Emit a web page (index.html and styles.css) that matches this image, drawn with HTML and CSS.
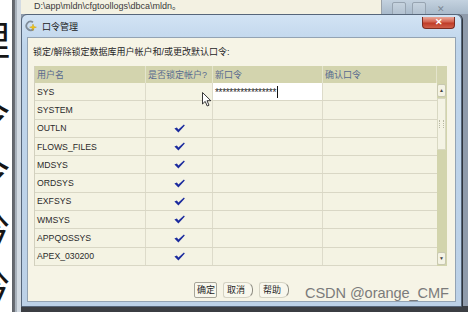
FILE: index.html
```html
<!doctype html>
<html>
<head>
    <meta charset="utf-8">
    <title>口令管理</title>
    <link rel="stylesheet" href="styles.css">
</head>
<body>
<div class="desk">
    <div class="side_doc">
        <span class="first">理</span>
        <span>令</span>
        <span>令</span>
        <span>钤</span>
        <span>钤</span>
    </div>
    <div class="side_frame"></div>
    <div class="back_win">
        <div class="back_top">
            <div class="back_path">D:\app\mldn\cfgtoollogs\dbca\mldn。</div>
            <div class="back_caption">
                <i></i><i></i><i class="x">✕</i>
            </div>
        </div>
        <div class="back_body"></div>
    </div>
</div>

<div class="dialog">
    <div class="titlebar">
        <svg class="icon" width="12" height="12" viewBox="0 0 12 12">
            <path d="M8 2.2 A4.3 4.3 0 1 0 8.6 9" fill="none" stroke="#7f8c99" stroke-width="1.8"/>
            <path d="M8 4 L8.8 6.4 L11.4 7.2 L8.8 8 L8 10.6 L7.2 8 L4.6 7.2 L7.2 6.4 Z" fill="#f1c40f" stroke="#c99a06" stroke-width="0.4"/>
        </svg>
        <span class="title">口令管理</span>
        <span class="close">✕</span>
    </div>
    <div class="client">
        <p class="hint">锁定/解除锁定数据库用户帐户和/或更改默认口令:</p>
        <div class="grid">
            <div class="row head">
                <div class="c1">用户名</div>
                <div class="c2">是否锁定帐户?</div>
                <div class="c3">新口令</div>
                <div class="c4">确认口令</div>
                <div class="c5"></div>
            </div>
            <div class="grid_body">
                <div class="rows">
                    <div class="row">
                        <div class="c1">SYS</div>
                        <div class="c2"></div>
                        <div class="c3 edit">*****************<span class="caret"></span></div>
                        <div class="c4"></div>
                    </div>
                    <div class="row">
                        <div class="c1">SYSTEM</div>
                        <div class="c2"></div>
                        <div class="c3"></div>
                        <div class="c4"></div>
                    </div>
                    <div class="row">
                        <div class="c1">OUTLN</div>
                        <div class="c2"><svg class="tick" width="11" height="9" viewBox="0 0 11 9"><path d="M0.4 4.6 L2.9 3.6 L4.4 5.6 L9.9 0.4 L10.8 1.4 L4.4 8.6 Z"/></svg></div>
                        <div class="c3"></div>
                        <div class="c4"></div>
                    </div>
                    <div class="row">
                        <div class="c1">FLOWS_FILES</div>
                        <div class="c2"><svg class="tick" width="11" height="9" viewBox="0 0 11 9"><path d="M0.4 4.6 L2.9 3.6 L4.4 5.6 L9.9 0.4 L10.8 1.4 L4.4 8.6 Z"/></svg></div>
                        <div class="c3"></div>
                        <div class="c4"></div>
                    </div>
                    <div class="row">
                        <div class="c1">MDSYS</div>
                        <div class="c2"><svg class="tick" width="11" height="9" viewBox="0 0 11 9"><path d="M0.4 4.6 L2.9 3.6 L4.4 5.6 L9.9 0.4 L10.8 1.4 L4.4 8.6 Z"/></svg></div>
                        <div class="c3"></div>
                        <div class="c4"></div>
                    </div>
                    <div class="row">
                        <div class="c1">ORDSYS</div>
                        <div class="c2"><svg class="tick" width="11" height="9" viewBox="0 0 11 9"><path d="M0.4 4.6 L2.9 3.6 L4.4 5.6 L9.9 0.4 L10.8 1.4 L4.4 8.6 Z"/></svg></div>
                        <div class="c3"></div>
                        <div class="c4"></div>
                    </div>
                    <div class="row">
                        <div class="c1">EXFSYS</div>
                        <div class="c2"><svg class="tick" width="11" height="9" viewBox="0 0 11 9"><path d="M0.4 4.6 L2.9 3.6 L4.4 5.6 L9.9 0.4 L10.8 1.4 L4.4 8.6 Z"/></svg></div>
                        <div class="c3"></div>
                        <div class="c4"></div>
                    </div>
                    <div class="row">
                        <div class="c1">WMSYS</div>
                        <div class="c2"><svg class="tick" width="11" height="9" viewBox="0 0 11 9"><path d="M0.4 4.6 L2.9 3.6 L4.4 5.6 L9.9 0.4 L10.8 1.4 L4.4 8.6 Z"/></svg></div>
                        <div class="c3"></div>
                        <div class="c4"></div>
                    </div>
                    <div class="row">
                        <div class="c1">APPQOSSYS</div>
                        <div class="c2"><svg class="tick" width="11" height="9" viewBox="0 0 11 9"><path d="M0.4 4.6 L2.9 3.6 L4.4 5.6 L9.9 0.4 L10.8 1.4 L4.4 8.6 Z"/></svg></div>
                        <div class="c3"></div>
                        <div class="c4"></div>
                    </div>
                    <div class="row">
                        <div class="c1">APEX_030200</div>
                        <div class="c2"><svg class="tick" width="11" height="9" viewBox="0 0 11 9"><path d="M0.4 4.6 L2.9 3.6 L4.4 5.6 L9.9 0.4 L10.8 1.4 L4.4 8.6 Z"/></svg></div>
                        <div class="c3"></div>
                        <div class="c4"></div>
                    </div>
                </div>
                <div class="scroll">
                    <div class="arrow">▲</div>
                    <div class="thumb"><span></span></div>
                    <div class="track"></div>
                    <div class="arrow">▼</div>
                </div>
            </div>
        </div>
        <div class="buttons">
            <a href="javascript:;" class="btn default">确定</a>
            <a href="javascript:;" class="btn">取消</a>
            <a href="javascript:;" class="btn">帮助</a>
        </div>
    </div>
</div>

<div class="watermark">CSDN @orange_CMF</div>

<!--鼠标指针-->
<svg class="pointer" width="10" height="15" viewBox="0 0 10 15">
    <path d="M0.5 0.5 L0.5 12 L3.2 9.4 L5.2 14 L7 13.2 L5 8.7 L8.8 8.7 Z" fill="#fff" stroke="#222" stroke-width="0.9"/>
</svg>
</body>
</html>
```

FILE: styles.css
```css
body,
p {
    margin: 0;
    padding: 0;
}

body {
    width: 468px;
    height: 312px;
    overflow: hidden;
    position: relative;
    background: #44484d;
    font-family: "Liberation Sans", "Noto Sans CJK SC", sans-serif;
}

a {
    text-decoration: none;
    color: inherit;
}

/*背景窗口*/
.desk {
    display: flex;
    height: 312px;
}

.side_doc {
    width: 12px;
    flex: none;
    background: #fff;
    overflow: hidden;
    display: flex;
    flex-direction: column;
    gap: 17px;
    padding-top: 18px;
}

.side_doc span {
    display: block;
    font: 40px/40px "Noto Sans CJK SC", sans-serif;
    margin-left: -30px;
    color: #151515;
}

.side_doc .first {
    margin-bottom: 18px;
}

.side_frame {
    width: 9px;
    flex: none;
    background: linear-gradient(to right, #5e6268 0, #6c7077 3px, #a9b2bc 3px, #a9b2bc 5px, #d3dbe3 5px);
}

.back_win {
    flex: 1;
    display: flex;
    flex-direction: column;
}

.back_top {
    height: 14px;
    display: flex;
}

.back_path {
    width: 361px;
    box-sizing: border-box;
    padding-left: 13px;
    background: #f3f1e2;
    border-right: 1px solid #9aa1a8;
    font-size: 9px;
    line-height: 13px;
    color: #3a3a3a;
}

.back_caption {
    flex: 1;
    display: flex;
    align-items: flex-start;
    gap: 6px;
    padding: 2px 0 0 10px;
    background: linear-gradient(#c4d2df, #a9bacb);
}

.back_caption i {
    width: 12px;
    height: 12px;
    border: 1px solid #97a4b1;
    border-radius: 2px;
    background: rgba(255, 255, 255, .12);
    font-style: normal;
    font-size: 9px;
    line-height: 12px;
    text-align: center;
    color: #7c8793;
}

.back_caption .x {
    border-color: transparent;
    background: none;
    margin-left: 2px;
}

.back_body {
    flex: 1;
    background: linear-gradient(#8f9bab 0, #8f9bab 292px, #3b3e43 292px);
}

/*对话框*/
.dialog {
    position: absolute;
    left: 21px;
    top: 14px;
    width: 441px;
    height: 293px;
    box-sizing: border-box;
    border: 1px solid #56667a;
    border-radius: 6px 6px 0 0;
    background: linear-gradient(#d2e3f4, #bfd5eb 30px, #bcd1e7);
    padding: 0 5px 4px 5px;
    display: flex;
    flex-direction: column;
    box-shadow: 1px 0 0 #2f353d;
}

.titlebar {
    height: 22px;
    display: flex;
    align-items: center;
    gap: 5px;
}

.icon {
    margin-left: -2px;
}

.title {
    flex: 1;
    font-size: 9px;
    color: #1a1a1a;
}

.close {
    align-self: flex-start;
    margin-top: 2px;
    margin-right: 1px;
    width: 33px;
    height: 12px;
    box-sizing: border-box;
    border: 1px solid #7b2b20;
    border-top: none;
    border-radius: 0 0 4px 4px;
    background: linear-gradient(#eaa697, #d36350 45%, #bf3b27 55%, #d0604a);
    color: #fff;
    font-size: 9px;
    font-weight: bold;
    line-height: 11px;
    text-align: center;
}

.client {
    flex: 1;
    background: #f6f4e6;
    border: 1px solid #93a3b3;
    padding: 9px 8px 0 6px;
}

.hint {
    margin-left: -1px;
    margin-bottom: 8px;
    font-size: 9px;
    line-height: 11px;
    color: #262626;
}

/*表格*/
.grid {
    width: 413px;
    border-left: 1px solid #d2d0be;
    box-sizing: border-box;
}

.row {
    display: flex;
    height: 18.3px;
    box-sizing: border-box;
    border-bottom: 1px solid #d9d7c5;
    background: #f4f3e3;
    font-size: 8.7px;
    color: #2a2a2a;
}

.row div {
    box-sizing: border-box;
    border-right: 1px solid #dddbca;
    display: flex;
    align-items: center;
    padding-left: 2px;
}

.c1 {
    width: 111px;
}

.c2 {
    width: 67px;
    justify-content: center;
}

.c3 {
    width: 110px;
    position: relative;
}

.c4 {
    width: 114px;
}

.row .c4 {
    border-right: none;
}

.head {
    height: 17px;
    background: #d3d4ae;
    border-bottom: none;
    color: #586a8e;
    font-size: 9px;
}

.head div {
    border-right: 1px solid #e4e4cc;
}

.head .c2 {
    justify-content: flex-start;
}

.head .c4 {
    border-right: 1px solid #e4e4cc;
}

.head .c5 {
    flex: 1;
    border-right: none;
}

.grid_body {
    display: flex;
}

.rows {
    flex: 1;
}

.edit {
    background: #fff;
    font-size: 10px;
    letter-spacing: -0.3px;
    padding-top: 2px;
}

.caret {
    display: inline-block;
    width: 1px;
    height: 12px;
    margin-left: 1px;
    margin-top: -2px;
    background: #111;
}

.tick {
    fill: #1b2b9e;
    margin-left: -2px;
}

/*滚动条*/
.scroll {
    width: 11px;
    display: flex;
    flex-direction: column;
    background: #d2d4ac;
    padding-right: 1px;
}

.arrow {
    height: 11px;
    margin: 1px 0;
    background: #f4f3e4;
    border: 1px solid #c8c8b0;
    border-radius: 2px;
    font-size: 5px;
    line-height: 11px;
    text-align: center;
    color: #444;
}

.thumb {
    height: 50px;
    background: #f4f3e4;
    border: 1px solid #d8d8c2;
    display: flex;
    align-items: center;
    justify-content: center;
}

.thumb span {
    width: 3px;
    height: 8px;
    border-left: 1px dotted #b9b9a4;
    border-right: 1px dotted #b9b9a4;
}

.track {
    flex: 1;
}

/*按钮*/
.buttons {
    display: flex;
    gap: 6px;
    margin-top: 16px;
    padding-left: 160px;
}

.btn {
    height: 16px;
    box-sizing: border-box;
    padding: 0 4px 0 3px;
    border: 1px solid #d5d3c4;
    border-right: 1.5px solid #8e8c82;
    border-radius: 3px 7px 7px 3px;
    background: #f8f7ed;
    font-size: 9px;
    line-height: 14px;
    color: #1e1e1e;
}

.btn.default {
    padding: 0 1px 0 2px;
    border-color: #a7a599;
    border-radius: 2px;
}

.btn + .btn {
    padding-right: 7px;
}

/*水印*/
.watermark {
    position: absolute;
    left: 305px;
    top: 285px;
    font-size: 14.6px;
    line-height: 17px;
    color: #7b7b7b;
    letter-spacing: -0.1px;
}

.pointer {
    position: absolute;
    left: 202px;
    top: 92px;
}
```
